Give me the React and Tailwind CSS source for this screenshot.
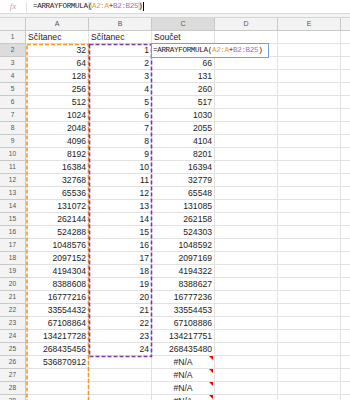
import React from "react";

const COLS = ["A", "B", "C", "D", "E", "F"];
const ROWS = Array.from({ length: 29 }, (_, i) => i + 1);

function cellValue(r, c) {
  if (r === 1) {
    if (c === "A" || c === "B") return { text: "Sčítanec", align: "left" };
    if (c === "C") return { text: "Součet", align: "left" };
    return null;
  }
  if (c === "A" && r <= 26) return { text: String(2 ** (r + 3)), align: "right" };
  if (c === "B" && r <= 25) return { text: String(r - 1), align: "right" };
  if (c === "C") {
    if (r === 2) return null;
    if (r <= 25) return { text: String(2 ** (r + 3) + r - 1), align: "right" };
    return { text: "#N/A", align: "center", error: true };
  }
  return null;
}

function Formula({ bar }) {
  return (
    <span className="whitespace-nowrap">
      =ARRAYFORMULA
      <span className={bar ? "bg-[#e3e3e3]" : ""}>(</span>
      <span className="text-[#f09a35]">A2:A</span>
      +
      <span className="text-[#9d6fc4]">B2:B25</span>
      <span className={bar ? "bg-[#e3e3e3]" : ""}>)</span>
    </span>
  );
}

export default function App() {
  return (
    <div className="w-[350px] h-[400px] overflow-hidden bg-white font-['Liberation_Sans',Arial,sans-serif] text-[#222]">
      {/* Formula bar */}
      <div className="h-[14px] flex items-center border-b border-[#dadada] bg-white">
        <div className="w-[26px] flex justify-center items-center font-['Liberation_Serif',serif] italic text-[9px] text-[#aaa]">
          fx
        </div>
        <div className="w-px h-[10px] bg-[#e0e0e0]" />
        <div className="pl-[6px] flex items-center font-['Liberation_Mono',monospace] text-[7.6px] tracking-[-0.35px] text-[#222]">
          <Formula bar />
          <span className="ml-[1px] w-px h-[9px] bg-black" />
        </div>
      </div>
      <div className="h-[4px] bg-[#f3f3f3] border-b border-[#d4d4d4]" />

      {/* Grid */}
      <div className="relative">
        <div className="grid grid-cols-[26px_63px_63px_63px_63px_63px_63px] auto-rows-[13px]">
          <div className="bg-[#f3f3f3] border-r border-b border-[#c9c9c9]" />
          {COLS.map((c) => (
            <div
              key={c}
              className={`flex items-center justify-center text-[7px] text-[#555] border-r border-b border-[#c9c9c9] ${
                c === "C" ? "bg-[#dcdcdc]" : "bg-[#f3f3f3]"
              }`}
            >
              {c}
            </div>
          ))}

          {ROWS.map((r) => (
            <React.Fragment key={r}>
              <div
                className={`flex items-center justify-center text-[6.6px] text-[#555] border-r border-b border-[#c9c9c9] ${
                  r === 2 ? "bg-[#dcdcdc]" : "bg-[#f3f3f3]"
                }`}
              >
                {r}
              </div>
              {COLS.map((c) => {
                const v = cellValue(r, c);
                return (
                  <div
                    key={c}
                    className={`relative flex items-center px-[2px] text-[8.6px] border-r border-b border-[#e2e2e2] whitespace-nowrap ${
                      v?.align === "right"
                        ? "justify-end"
                        : v?.align === "center"
                        ? "justify-center"
                        : "justify-start"
                    }`}
                  >
                    {v?.text}
                    {v?.error && (
                      <span className="absolute top-0 right-[1px] w-0 h-0 border-l-[4px] border-l-transparent border-t-[4px] border-t-[#e00]" />
                    )}
                  </div>
                );
              })}
            </React.Fragment>
          ))}
        </div>

        {/* Copy range highlights */}
        <svg
          className="absolute left-0 top-0 pointer-events-none"
          width="350"
          height="400"
        >
          <rect
            x="27"
            y="26.5"
            width="61.5"
            height="400"
            fill="none"
            stroke="#f7962a"
            strokeWidth="1.6"
            strokeDasharray="4 2"
          />
          <rect
            x="89.5"
            y="26.5"
            width="62"
            height="312"
            fill="none"
            stroke="#7a3b9c"
            strokeWidth="1.6"
            strokeDasharray="4 2"
          />
        </svg>

        {/* Cell editor */}
        <div className="absolute left-[151px] top-[25px] w-[118px] h-[15px] bg-white border border-[#6d9eeb] flex items-center pl-[1px] font-['Liberation_Mono',monospace] text-[7.6px] tracking-[-0.35px] text-[#222]">
          <Formula />
        </div>
      </div>
    </div>
  );
}
